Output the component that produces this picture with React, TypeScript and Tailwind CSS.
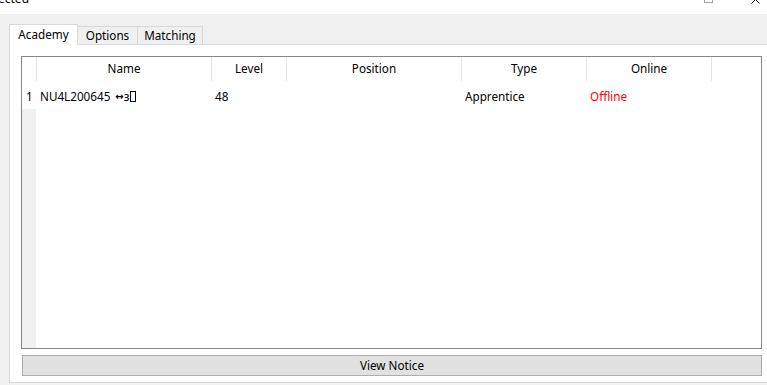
import React from 'react'

type Member = {
  no: number
  name: string
  level: number
  position: string
  type: string
  online: boolean
}

const members: Member[] = [
  { no: 1, name: 'NU4L200645', level: 48, position: '', type: 'Apprentice', online: false },
]

const columns = ['Name', 'Level', 'Position', 'Type', 'Online']

export default function App() {
  return (
    <div className="w-[767px] h-[385px] overflow-hidden bg-[#f0f0f0] flex flex-col text-[11.7px] text-black font-['Noto_Sans','Liberation_Sans',sans-serif]">
      {/* Title bar (mostly scrolled off) */}
      <div className="h-[14px] bg-white overflow-hidden flex justify-between">
        <div className="-mt-[9px] leading-[16px] text-[12px] -ml-[2px]">ected</div>
        <div className="flex items-start gap-[38px] pr-[7px]">
          <div className="w-[9px] h-[9px] border border-[#a0a0a0] -mt-[6px]" />
          <svg width="9" height="9" viewBox="0 0 9 9" className="-mt-[5px]">
            <path d="M0.5 0.5 L8.5 8.5 M8.5 0.5 L0.5 8.5" stroke="#000" strokeWidth="1" />
          </svg>
        </div>
      </div>

      <div className="flex-1 flex flex-col pl-[9px] pt-[10px]">
        {/* Tabs */}
        <div className="flex items-end h-[20px] relative z-10">
          <div className="h-[21px] w-[69px] bg-white border border-[#d9d9d9] border-b-0 flex items-center justify-center -mb-[1px] pb-[1px]">
            Academy
          </div>
          <div className="h-[18px] w-[60px] bg-[#f0f0f0] border border-[#d9d9d9] border-l-0 border-b-0 flex items-center justify-center">
            Options
          </div>
          <div className="h-[18px] w-[65px] bg-[#f0f0f0] border border-[#d9d9d9] border-l-0 border-b-0 flex items-center justify-center">
            Matching
          </div>
        </div>

        {/* Tab page */}
        <div className="w-[770px] h-[339px] bg-white border border-[#d9d9d9] pl-[11px] pt-[11px] flex flex-col">
          <div className="w-[741px] h-[293px] border border-[#828790] flex flex-col">
            <div className="grid grid-cols-[15px_175px_75px_175px_125px_125px_1fr] h-[24px]">
              <div className="border-r border-[#e5e5e5]" />
              {columns.map((c) => (
                <div key={c} className="border-r border-[#e5e5e5] flex items-center justify-center">
                  {c}
                </div>
              ))}
              <div />
            </div>
            <div className="h-[4px]" />
            {members.map((m) => (
              <div key={m.no} className="grid grid-cols-[15px_175px_75px_175px_125px_125px_1fr] h-[24px] items-center">
                <div className="pl-[4px]">{m.no}</div>
                <div className="pl-[3px] flex items-center">
                  {m.name}
                  <span className="ml-[5px] font-['DejaVu_Sans',sans-serif] text-[10px] font-bold leading-none">↔</span>
                  <span className="leading-none">з</span>
                  <span className="inline-block w-[6px] h-[11px] border border-black ml-[1px]" />
                </div>
                <div className="pl-[3px]">{m.level}</div>
                <div className="pl-[3px]">{m.position}</div>
                <div className="pl-[3px]">{m.type}</div>
                <div className={'pl-[3px] ' + (m.online ? 'text-black' : 'text-[#ff0000]')}>
                  {m.online ? 'Online' : 'Offline'}
                </div>
                <div />
              </div>
            ))}
            <div className="flex-1 flex">
              <div className="w-[14px] bg-[#f0f0f0]" />
              <div className="flex-1" />
            </div>
          </div>

          <button className="mt-[6px] ml-[1px] w-[740px] h-[21px] bg-[#e1e1e1] border border-[#adadad] flex items-center justify-center">
            View Notice
          </button>
        </div>
      </div>
    </div>
  )
}
